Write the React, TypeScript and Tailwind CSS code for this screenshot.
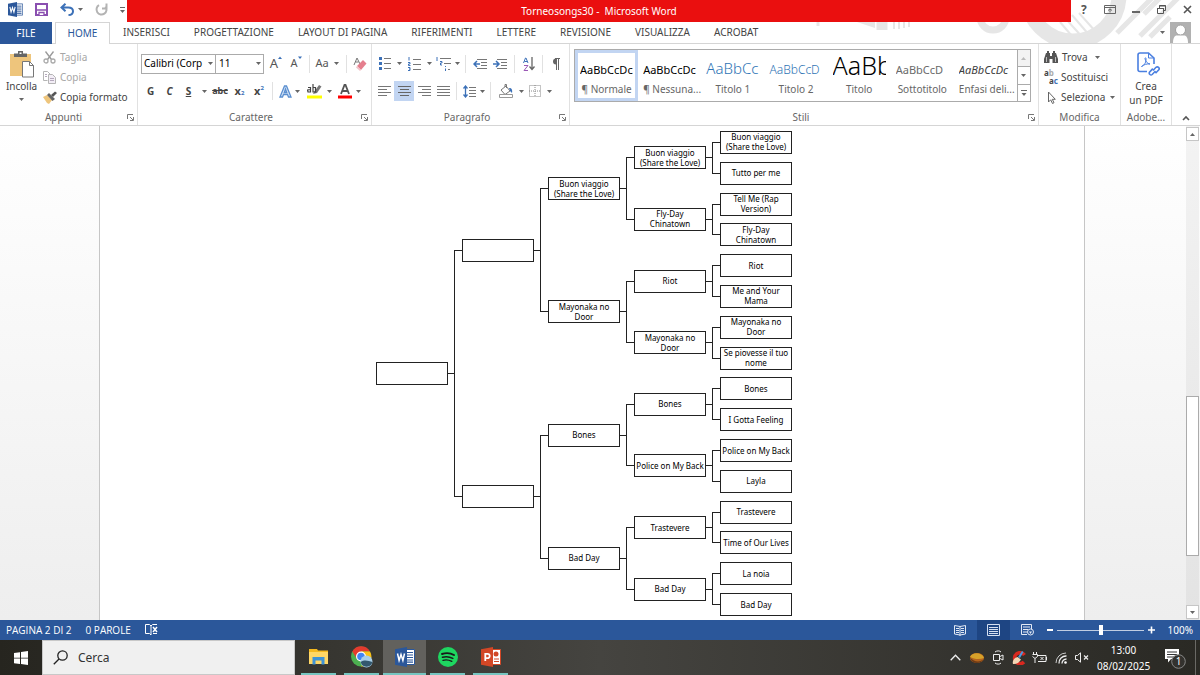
import { useState } from "react";
import type { ReactNode } from "react";

type Match = {
  label: string;
  feeders?: [Match, Match];
};

const bracket: Match = {
  label: "",
  feeders: [
    {
      label: "",
      feeders: [
        {
          label: "Buon viaggio\n(Share the Love)",
          feeders: [
            {
              label: "Buon viaggio\n(Share the Love)",
              feeders: [
                { label: "Buon viaggio\n(Share the Love)" },
                { label: "Tutto per me" },
              ],
            },
            {
              label: "Fly-Day\nChinatown",
              feeders: [
                { label: "Tell Me (Rap\nVersion)" },
                { label: "Fly-Day\nChinatown" },
              ],
            },
          ],
        },
        {
          label: "Mayonaka no\nDoor",
          feeders: [
            {
              label: "Riot",
              feeders: [{ label: "Riot" }, { label: "Me and Your\nMama" }],
            },
            {
              label: "Mayonaka no\nDoor",
              feeders: [
                { label: "Mayonaka no\nDoor" },
                { label: "Se piovesse il tuo\nnome" },
              ],
            },
          ],
        },
      ],
    },
    {
      label: "",
      feeders: [
        {
          label: "Bones",
          feeders: [
            {
              label: "Bones",
              feeders: [{ label: "Bones" }, { label: "I Gotta Feeling" }],
            },
            {
              label: "Police on My Back",
              feeders: [{ label: "Police on My Back" }, { label: "Layla" }],
            },
          ],
        },
        {
          label: "Bad Day",
          feeders: [
            {
              label: "Trastevere",
              feeders: [
                { label: "Trastevere" },
                { label: "Time of Our Lives" },
              ],
            },
            {
              label: "Bad Day",
              feeders: [{ label: "La noia" }, { label: "Bad Day" }],
            },
          ],
        },
      ],
    },
  ],
};

const tabs = [
  "INSERISCI",
  "PROGETTAZIONE",
  "LAYOUT DI PAGINA",
  "RIFERIMENTI",
  "LETTERE",
  "REVISIONE",
  "VISUALIZZA",
  "ACROBAT",
];

const styles = [
  { name: "¶ Normale", sample: "AaBbCcDc", look: "text-[11px] text-black" },
  { name: "¶ Nessuna...", sample: "AaBbCcDc", look: "text-[11px] text-black" },
  { name: "Titolo 1", sample: "AaBbCc", look: "text-[15px] font-light text-[#2e74b5]" },
  { name: "Titolo 2", sample: "AaBbCcD", look: "text-[12px] font-light text-[#2e74b5]" },
  { name: "Titolo", sample: "AaBb", look: "text-[25px] font-light text-black" },
  { name: "Sottotitolo", sample: "AaBbCcD", look: "text-[11px] text-[#6a6a6a]" },
  { name: "Enfasi deli...", sample: "AaBbCcDc", look: "text-[11px] italic text-[#404040]" },
];

function Icon({
  w,
  h,
  children,
}: {
  w: number;
  h: number;
  children: ReactNode;
}) {
  return (
    <svg
      width={w}
      height={h}
      viewBox={`0 0 ${w} ${h}`}
      fill="none"
      className="shrink-0"
      aria-hidden="true"
    >
      {children}
    </svg>
  );
}

function Caret({ className = "text-[#666]" }: { className?: string }) {
  return (
    <span className={`flex w-2 shrink-0 justify-center ${className}`}>
      <Icon w={5} h={3}>
        <path d="M0 0h5L2.500 3z" fill="currentColor" />
      </Icon>
    </span>
  );
}

function Tool({
  label,
  className = "w-5",
  children,
}: {
  label: string;
  className?: string;
  children: ReactNode;
}) {
  return (
    <button
      type="button"
      aria-label={label}
      className={`flex h-5 shrink-0 items-center justify-center ${className}`}
    >
      {children}
    </button>
  );
}

function Sep({ className = "mx-[3px]" }: { className?: string }) {
  return <span className={`h-[18px] w-px shrink-0 bg-[#e1e1e1] ${className}`} />;
}

function Group({
  title,
  launcher = false,
  className,
  children,
}: {
  title: string;
  launcher?: boolean;
  className: string;
  children: ReactNode;
}) {
  return (
    <section className={`flex flex-col ${className}`}>
      <div className="flex h-[66px] flex-col">{children}</div>
      <div className="flex h-4 items-center text-[#666]">
        <h2 className="flex-1 text-center text-[10px]">{title}</h2>
        {launcher && (
          <button type="button" aria-label={`Opzioni ${title}`} className="mr-[3px]">
            <Icon w={7} h={7}>
              <path d="M.5 5V.5H6M3 3l3 3M6.500 3v3.500H3" stroke="#777" />
            </Icon>
          </button>
        )}
      </div>
    </section>
  );
}

function WordLogo({ size }: { size: number }) {
  return (
    <svg width={size} height={size} viewBox="0 0 20 20" aria-hidden="true">
      <path d="M11 2.500h8.500v15H11z" fill="#fff" stroke="#2b579a" />
      <path
        d="M12 5.500h6M12 8h6M12 10.500h6M12 13h6M12 15.200h6"
        stroke="#2b579a"
        strokeWidth="1.200"
      />
      <path d="M0 2.200 12 0v20L0 17.800z" fill="#2b579a" />
      <path
        d="m2.500 6.500 1.600 7L6 7.500l1.900 6 1.600-7"
        fill="none"
        stroke="#fff"
        strokeWidth="1.500"
      />
    </svg>
  );
}

function TitleBar() {
  return (
    <div className="flex h-[22px]">
      <div className="flex w-[127px] shrink-0 items-center pb-[3px] pl-2">
        <WordLogo size={15} />
        <button type="button" aria-label="Salva" className="ml-3">
          <Icon w={13} h={13}>
            <path d="M1 1h11v11H1z" fill="#fff" stroke="#8a4fb0" strokeWidth="2" />
            <path d="M2 7h9" stroke="#8a4fb0" strokeWidth="1.500" />
            <path d="M4 12V9.500h5V12" fill="#fff" stroke="#8a4fb0" strokeWidth="1.300" />
          </Icon>
        </button>
        <button type="button" aria-label="Annulla" className="ml-3 flex items-center gap-[2px]">
          <Icon w={14} h={13}>
            <path
              d="M5.500.8 1.500 4.500l4 3.700M1.500 4.500h6.800c3 0 4.700 1.500 4.700 3.700 0 2.500-2 3.800-4.500 3.800"
              stroke="#3c71b8"
              strokeWidth="2"
            />
          </Icon>
          <Caret />
        </button>
        <button type="button" aria-label="Ripeti" className="ml-[11px]">
          <Icon w={13} h={13}>
            <path
              d="M4 2.200A5 5 0 1 0 10.500 3.500M7 5.500h4.500V.5"
              stroke="#b3b3b3"
              strokeWidth="2"
            />
          </Icon>
        </button>
        <button type="button" aria-label="Personalizza" className="ml-3">
          <Icon w={5} h={6}>
            <path d="M0 .5h5" stroke="#666" />
            <path d="M0 3h5L2.500 6z" fill="#666" />
          </Icon>
        </button>
      </div>
      <h1 className="flex-1 bg-[#ea0f0f] text-center text-[10px] leading-[22px] whitespace-pre text-white">
        Torneosongs30 -  Microsoft Word
      </h1>
      <div className="flex w-[129px] shrink-0 items-center justify-between pr-2 pb-[3px] pl-[10px]">
        <button type="button" aria-label="Guida" className="text-[12px] font-bold text-[#555]">
          ?
        </button>
        <button type="button" aria-label="Opzioni barra multifunzione">
          <Icon w={12} h={9}>
            <path d="M.5.5h11v8H.5zM1 2.500h10" stroke="#666" />
            <path d="M6 7.500V4M4 5.500 6 3.800l2 1.700" stroke="#666" />
          </Icon>
        </button>
        <button type="button" aria-label="Riduci a icona">
          <Icon w={8} h={8}>
            <path d="M0 6h8" stroke="#666" strokeWidth="2" />
          </Icon>
        </button>
        <button type="button" aria-label="Ripristina">
          <Icon w={9} h={9}>
            <path d="M.5 3.500h6v5h-6zM2.500 3V.5h6v5H7" stroke="#555" />
            <path d="M0 3.500h7M2 1h7" stroke="#555" />
          </Icon>
        </button>
        <button type="button" aria-label="Chiudi">
          <Icon w={9} h={9}>
            <path d="m1 1 7 7M8 1 1 8" stroke="#555" strokeWidth="1.600" />
          </Icon>
        </button>
      </div>
    </div>
  );
}

function TabBar() {
  return (
    <nav className="flex h-[22px] items-stretch text-[10px] text-[#444]">
      <button type="button" className="w-[52px] bg-[#2b579a] text-white">
        FILE
      </button>
      <div className="w-[3px] border-b border-[#d5d5d5]" />
      <button
        type="button"
        className="w-[55px] border-x border-t border-[#d5d5d5] bg-white text-[#2b579a]"
      >
        HOME
      </button>
      <div className="flex flex-1 items-center gap-6 border-b border-[#d5d5d5] pl-[13px]">
        {tabs.map((tab) => (
          <button key={tab} type="button">
            {tab}
          </button>
        ))}
      </div>
      <div className="flex items-center gap-1 border-b border-[#d5d5d5] pr-[9px]">
        <Caret />
        <Icon w={21} h={21}>
          <path d="M0 0h21v21H0z" fill="#b1b1b1" />
          <circle cx="10.500" cy="8" r="5" fill="#fff" stroke="#a0a0a0" />
          <path d="M3 21c0-5 1.500-7.500 4-7.500h7c2.500 0 4 2.500 4 7.500z" fill="#fff" />
        </Icon>
      </div>
    </nav>
  );
}

function HeaderPattern() {
  return (
    <svg
      width="400"
      height="43"
      viewBox="0 0 400 43"
      fill="none"
      className="absolute top-0 right-0"
      aria-hidden="true"
    >
      <g stroke="#e6e6e6">
        <circle cx="273" cy="-5" r="46" strokeWidth="15" />
        <circle cx="193" cy="17" r="13" strokeWidth="7" />
        <path
          d="m260 22 17 20M266 19l18 20M272 15l18 21M279 13l17 19"
          strokeWidth="2"
        />
        <path d="m317 33 36-36M328 22l28-28M340 36l44-44M350 37l20-20M344 14l22-22" strokeWidth="5" />
        <path d="M94 22v7M99 22v7M104 22v6M109 22v5" strokeWidth="2" />
        <path d="M82 22v8" strokeWidth="11" />
        <path d="M18 22v4" strokeWidth="3" />
      </g>
      <path d="M57 22h18v6z" fill="#e6e6e6" />
    </svg>
  );
}

function ClipboardGroup() {
  return (
    <Group title="Appunti" launcher className="w-[138px] shrink-0 border-r border-[#e1e1e1]">
      <div className="flex">
        <button
          type="button"
          className="flex w-[43px] flex-col items-center pt-[7px] text-[10px] text-[#444]"
        >
          <Icon w={26} h={27}>
            <path d="M1 3h21v22H1z" fill="#eec57c" />
            <path d="M5 6V2.500h4V0h5v2.500h4V6z" fill="#666" />
            <path d="M10.500 1.500h2v1.500h-2z" fill="#fff" />
            <path d="M13.500 10.500h7l4 4V26h-11z" fill="#fff" stroke="#777" />
            <path d="M20.500 10.500v4h4" stroke="#777" />
          </Icon>
          <span className="mt-px">Incolla</span>
          <span className="mt-1">
            <Caret />
          </span>
        </button>
        <div className="flex flex-col pt-[3px] text-[10px] text-[#444]">
          <button type="button" className="flex h-5 items-center gap-1 text-[#a6a6a6]">
            <Icon w={13} h={13}>
              <path d="m2.500.5 6 8M10.500.5l-6 8" stroke="#999" strokeWidth="1.300" />
              <circle cx="3" cy="10" r="2" stroke="#aaa" strokeWidth="1.300" />
              <circle cx="10" cy="10" r="2" stroke="#aaa" strokeWidth="1.300" />
            </Icon>
            Taglia
          </button>
          <button type="button" className="flex h-5 items-center gap-1 text-[#a6a6a6]">
            <Icon w={13} h={13}>
              <path d="M4.500 9.500h-4v-9h4l3 3" stroke="#b5b5b5" />
              <path d="M5.500 3.500h4l3 3v6h-7z" fill="#f3eef6" stroke="#b5b5b5" />
              <path d="M2 3.500h2M2 5.500h2M7 7.500h4M7 9.500h4" stroke="#b5a9bd" />
            </Icon>
            Copia
          </button>
          <button type="button" className="flex h-5 items-center gap-[3px]">
            <Icon w={14} h={13}>
              <path d="m0 6 4-2 5 5-3 4-2-1z" fill="#eec57c" />
              <path d="m4 4 2-2 6 6-2.500 2z" fill="#666" />
              <path d="m8 4 4-3.500L14 2l-4 4z" fill="#555" />
            </Icon>
            Copia formato
          </button>
        </div>
      </div>
    </Group>
  );
}

function FontGroup() {
  return (
    <Group
      title="Carattere"
      launcher
      className="w-[234px] shrink-0 border-r border-[#e1e1e1] pl-[3px]"
    >
      <div className="flex h-[37px] items-center pt-[2px]">
        <div className="relative w-[75px]">
          <select
            aria-label="Tipo di carattere"
            className="block h-5 w-full appearance-none border border-[#ababab] bg-white pl-[2px] text-[10px] text-black"
          >
            <option>Calibri (Corp</option>
          </select>
          <span className="pointer-events-none absolute top-2 right-[2px]">
            <Caret />
          </span>
        </div>
        <div className="relative mr-[2px] w-12">
          <select
            aria-label="Dimensione carattere"
            className="block h-5 w-full appearance-none border border-l-0 border-[#ababab] bg-white pl-[3px] text-[10px] text-black"
          >
            <option>11</option>
          </select>
          <span className="pointer-events-none absolute top-2 right-[2px]">
            <Caret />
          </span>
        </div>
        <Tool label="Aumenta carattere">
          <span className="text-[13px] text-[#555]">A</span>
          <span className="self-start text-[#3c71b8]">
            <Icon w={4} h={5}>
              <path d="M0 5 2 2.500 4 5z" fill="currentColor" />
            </Icon>
          </span>
        </Tool>
        <Tool label="Riduci carattere">
          <span className="text-[11px] text-[#555]">A</span>
          <span className="self-start">
            <Icon w={4} h={5}>
              <path d="M0 2.500h4L2 5z" fill="#3c71b8" />
            </Icon>
          </span>
        </Tool>
        <Sep />
        <Tool label="Maiuscole/minuscole" className="w-[30px] gap-1">
          <span className="text-[11px] text-[#555]">Aa</span>
          <Caret />
        </Tool>
        <Sep />
        <Tool label="Cancella formattazione">
          <Icon w={14} h={14}>
            <path d="m1 8 3-7 3 6M2.500 5h3" stroke="#777" />
            <path d="m4 9 6-6 3.500 3.500L8 13z" fill="#e57f8e" />
            <path d="m4 9 4 4-1 1-4-3.500z" fill="#f3c4ca" />
          </Icon>
        </Tool>
      </div>
      <div className="flex h-5 items-center text-[#444]">
        <Tool label="Grassetto" className="w-[19px] text-[10px] font-bold">
          G
        </Tool>
        <Tool label="Corsivo" className="w-[19px] text-[10px] font-bold italic">
          C
        </Tool>
        <Tool label="Sottolineato" className="w-[19px] text-[10px] font-bold underline">
          S
        </Tool>
        <Tool label="Stile sottolineatura" className="w-3">
          <Caret />
        </Tool>
        <Tool label="Barrato" className="w-5 text-[9px] font-bold line-through">
          abc
        </Tool>
        <Tool label="Pedice" className="w-[19px] text-[11px] font-bold">
          x
          <sub className="text-[6px] text-[#3c71b8]">2</sub>
        </Tool>
        <Tool label="Apice" className="w-5 text-[11px] font-bold">
          x
          <sup className="text-[6px] text-[#3c71b8]">2</sup>
        </Tool>
        <Sep />
        <Tool label="Effetti testo" className="w-[28px]">
          <Icon w={13} h={13}>
            <path
              d="M1 12 5.500 1h2L12 12H9.500L8.500 9.500h-4L3.500 12zM5.300 7.500h2.400L6.500 4z"
              fill="#dbe8f7"
              stroke="#5b8fd0"
              strokeWidth="1.300"
            />
          </Icon>
          <span className="ml-[2px]">
            <Caret />
          </span>
        </Tool>
        <Tool label="Colore evidenziatore" className="w-8 gap-1">
          <Icon w={15} h={15}>
            <path d="M7 8 12 1l2.500 1.500L10 9l-4 1z" fill="#777" />
            <path
              d="M1 3.500h2.500V8H1L.5 6 3.500 5.500M6 0v8h2.500V3.500H6"
              stroke="#444"
              strokeWidth="1.200"
            />
            <path d="M0 11.500h15v3H0z" fill="#ffff00" />
          </Icon>
          <Caret />
        </Tool>
        <Tool label="Colore carattere" className="w-7 gap-[3px]">
          <Icon w={14} h={15}>
            <path d="m3 10 3.500-9h1L11 10M4.500 7h5" stroke="#555" strokeWidth="1.800" />
            <path d="M0 11.500h14v3H0z" fill="#ff0000" />
          </Icon>
          <Caret />
        </Tool>
      </div>
    </Group>
  );
}

function ParagraphGroup() {
  return (
    <Group
      title="Paragrafo"
      launcher
      className="w-[198px] shrink-0 border-r border-[#e1e1e1] pl-[3px]"
    >
      <div className="flex h-[37px] items-center pt-[2px]">
        <Tool label="Elenchi puntati">
          <Icon w={12} h={13}>
            <path d="M0 0h3v3H0zM0 5h3v3H0zM0 10h3v3H0z" fill="#3c71b8" />
            <path d="M5 1.500h7M5 6.500h7M5 11.500h7" stroke="#777" />
          </Icon>
        </Tool>
        <Caret />
        <Tool label="Elenchi numerati" className="w-[22px]">
          <Icon w={13} h={14}>
            <path
              d="M1 0v3.500M0 5.500h2v1.500H.5v1.500h2M0 10.500h2v3H0M1 12h1"
              stroke="#3c71b8"
            />
            <path d="M5 2.500h8M5 7.500h8M5 12.500h8" stroke="#777" />
          </Icon>
        </Tool>
        <Caret />
        <Tool label="Elenco a più livelli">
          <Icon w={15} h={14}>
            <path d="M1 0v4M4 4.500h2V6H4.500v2H6M9.500 9v1M9.500 11.500V14" stroke="#3c71b8" />
            <path d="M4 1.500h11M8 6.500h7M12 12.500h2" stroke="#777" />
          </Icon>
        </Tool>
        <Caret />
        <Sep className="mx-1" />
        <Tool label="Riduci rientro">
          <Icon w={14} h={11}>
            <path d="M4 1.500h10M8 4.500h6M8 7.500h6M4 10.500h10" stroke="#777" />
            <path d="M7 6H1M4 3 1 6l3 3" stroke="#3c71b8" strokeWidth="1.500" />
          </Icon>
        </Tool>
        <Tool label="Aumenta rientro">
          <Icon w={14} h={11}>
            <path d="M4 1.500h10M8 4.500h6M8 7.500h6M4 10.500h10" stroke="#777" />
            <path d="M0 6h6M3 3l3 3-3 3" stroke="#3c71b8" strokeWidth="1.500" />
          </Icon>
        </Tool>
        <Sep className="mx-1" />
        <Tool label="Ordina">
          <Icon w={12} h={14}>
            <path d="m.5 6 2-5h.5l2 5M1.500 4.500h3" stroke="#3c71b8" />
            <path d="M1 8.500h4l-4 5h4" stroke="#9b59b6" />
            <path d="M9 0v12M6.500 9.500 9 12.500l2.500-3" stroke="#666" strokeWidth="1.300" />
          </Icon>
        </Tool>
        <Sep />
        <Tool label="Mostra tutto">
          <Icon w={8} h={12}>
            <path d="M4 6.500A3 3 0 0 1 4 .5z" fill="#666" />
            <path d="M3 .5h5M4.500 1v11M6.500 1v11" stroke="#666" />
          </Icon>
        </Tool>
      </div>
      <div className="flex h-5 items-center">
        <Tool label="Allinea a sinistra" className="w-[19px]">
          <Icon w={13} h={10}>
            <path d="M0 .5h13M0 3.500h9M0 6.500h13M0 9.500h9" stroke="#777" />
          </Icon>
        </Tool>
        <Tool label="Centra" className="w-5 bg-[#c2d5f2]">
          <Icon w={13} h={10}>
            <path d="M0 .5h13M2 3.500h9M0 6.500h13M2 9.500h9" stroke="#666" />
          </Icon>
        </Tool>
        <Tool label="Allinea a destra">
          <Icon w={13} h={10}>
            <path d="M0 .5h13M4 3.500h9M0 6.500h13M4 9.500h9" stroke="#777" />
          </Icon>
        </Tool>
        <Tool label="Giustifica" className="w-[19px]">
          <Icon w={13} h={10}>
            <path d="M0 .5h13M0 3.500h13M0 6.500h13M0 9.500h13" stroke="#777" />
          </Icon>
        </Tool>
        <Sep />
        <Tool label="Interlinea" className="w-[18px]">
          <Icon w={13} h={13}>
            <path d="M2.500 1v11M.5 3.500l2-2.500 2 2.500M.5 9.500l2 2.500 2-2.500" stroke="#3c71b8" strokeWidth="1.300" />
            <path d="M6 2.500h7M6 5.500h7M6 8.500h7M6 11.500h7" stroke="#777" />
          </Icon>
        </Tool>
        <Caret />
        <Sep className="mx-1" />
        <Tool label="Sfondo" className="w-[22px]">
          <Icon w={14} h={14}>
            <path d="m2 6 5-4 4 5-5 3.500zM6 3V.5h1.500V4" stroke="#777" />
            <path d="M10 4c3 0 3.500 2 3 5l-2-2z" fill="#3c71b8" />
            <path d="M.5 10.500h13v3H.5z" fill="#fff" stroke="#999" />
          </Icon>
        </Tool>
        <Caret />
        <Tool label="Bordi">
          <Icon w={12} h={12}>
            <path
              d="M.5.5h11v11H.5zM6 0v12M0 6h12"
              stroke="#888"
              strokeDasharray="1 1"
            />
          </Icon>
        </Tool>
        <Caret />
      </div>
    </Group>
  );
}

function StylesGroup() {
  const [selected, setSelected] = useState("¶ Normale");

  return (
    <Group
      title="Stili"
      launcher
      className="min-w-0 flex-1 border-r border-[#e1e1e1] pl-1"
    >
      <div className="mt-[5px] mr-[7px] flex h-[53px] border border-[#ababab] bg-white">
        {styles.map((style) => (
          <button
            key={style.name}
            type="button"
            onClick={() => setSelected(style.name)}
            className={
              style.name === selected
                ? "flex min-w-0 flex-1 flex-col border-[3px] border-[#c2d5f2] px-[2px]"
                : "flex min-w-0 flex-1 flex-col px-[5px] py-[3px]"
            }
          >
            <span
              className={`flex h-7 w-full items-baseline overflow-hidden leading-none whitespace-nowrap before:h-[21px] ${style.look}`}
            >
              {style.sample}
            </span>
            <span className="w-full text-center text-[10px] leading-4 whitespace-nowrap text-[#666]">
              {style.name}
            </span>
          </button>
        ))}
        <div className="flex w-[13px] flex-col divide-y divide-[#ababab] border-l border-[#ababab]">
          <button
            type="button"
            aria-label="Stili precedenti"
            className="flex flex-1 items-center justify-center bg-[#f3f3f3]"
          >
            <Icon w={5} h={3}>
              <path d="M0 3h5L2.500 0z" fill="#bbb" />
            </Icon>
          </button>
          <button
            type="button"
            aria-label="Stili successivi"
            className="flex flex-1 items-center justify-center"
          >
            <Caret />
          </button>
          <button
            type="button"
            aria-label="Altri stili"
            className="flex flex-1 items-center justify-center"
          >
            <Icon w={6} h={6}>
              <path d="M0 .5h6" stroke="#666" />
              <path d="M.5 3h5L3 6z" fill="#666" />
            </Icon>
          </button>
        </div>
      </div>
    </Group>
  );
}

function EditGroup() {
  return (
    <Group title="Modifica" className="w-[82px] shrink-0 border-r border-[#e1e1e1]">
      <div className="flex flex-col pt-[3px] pl-[5px] text-[10px] text-[#444]">
        <button type="button" className="flex h-5 items-center gap-1">
          <Icon w={14} h={12}>
            <path
              d="M2 2h4v3h2V2h4l2 6v4H8.500V8h-3v4H0V8zM3 0h2v2H3zM9 0h2v2H9z"
              fill="#555"
            />
            <path d="M2.500 6v5M11.500 6v5" stroke="#bbb" />
          </Icon>
          Trova
          <span className="ml-[2px]">
            <Caret />
          </span>
        </button>
        <button type="button" className="flex h-5 items-center gap-[3px]">
          <span className="flex w-[14px] flex-col text-[8px] leading-[8px] font-bold">
            <span className="self-start">
              a<span className="text-[#aaa]">b</span>
            </span>
            <span className="self-end">
              a<span className="text-[#3c71b8]">c</span>
            </span>
          </span>
          Sostituisci
        </button>
        <button type="button" className="flex h-5 items-center gap-[3px]">
          <Icon w={14} h={13}>
            <path d="M4.500 1v10l2.200-2.200L8.500 12.500l1.500-.8-1.700-3.400h3z" stroke="#666" />
          </Icon>
          <span>Seleziona</span>
          <Caret />
        </button>
      </div>
    </Group>
  );
}

function AdobeGroup() {
  return (
    <Group title="Adobe..." className="w-[51px] shrink-0 border-r border-[#e1e1e1]">
      <button
        type="button"
        className="flex flex-col items-center pt-2 text-[10px] leading-[14px] text-[#444]"
      >
        <span className="pl-1">
          <Icon w={23} h={26}>
            <path
              d="M10 19.500H3A2 2 0 0 1 1 17.500V3a2 2 0 0 1 2-2h8.500l5.500 5v6"
              stroke="#4a7fe0"
              strokeWidth="1.600"
            />
            <path d="M11.500 1v5H17" stroke="#4a7fe0" />
            <path
              d="M4.500 14.500c3-1 5-5 4.500-8-.2-1-1.200-1-1 .2.400 2.800 2.500 5 5 5.300-3-.4-6 .5-8.500 2.500z"
              stroke="#4a7fe0"
            />
            <path
              d="m16 18.500 3-3.200c1.800-1.300 4 .7 2.800 2.500l-3.300 3.400M18.500 19l-3.300 3.500c-1.500 1.300-3.700-.5-2.700-2.400l3.300-3.500"
              stroke="#4a7fe0"
              strokeWidth="1.600"
            />
          </Icon>
        </span>
        <span className="mt-px">Crea</span>
        <span>un PDF</span>
      </button>
    </Group>
  );
}

function Ribbon() {
  return (
    <div className="flex h-[82px] border-b border-[#d5d5d5] bg-white">
      <ClipboardGroup />
      <FontGroup />
      <ParagraphGroup />
      <StylesGroup />
      <EditGroup />
      <AdobeGroup />
      <div className="flex w-7 shrink-0 items-end justify-center pb-1">
        <button type="button" aria-label="Comprimi barra multifunzione">
          <Icon w={8} h={6}>
            <path d="m1 5 3-3 3 3" stroke="#555" strokeWidth="1.600" />
          </Icon>
        </button>
      </div>
    </div>
  );
}

function MatchTree({ match }: { match: Match }) {
  return (
    <div className="flex flex-1 items-center">
      <div className="flex h-[23px] w-[72px] shrink-0 items-center justify-center border border-[#222] bg-white text-center text-[8px] leading-[10px] whitespace-pre text-black">
        {match.label}
      </div>
      {match.feeders && (
        <>
          <div className="h-px w-[6px] bg-[#222]" />
          <div className="flex flex-col self-stretch">
            {match.feeders.map((feeder, i) => (
              <div key={i} className="flex flex-1">
                <div className="flex w-2 flex-col">
                  <div
                    className={i === 0 ? "flex-1" : "flex-1 border-b border-l border-[#222]"}
                  />
                  <div
                    className={i === 0 ? "flex-1 border-t border-l border-[#222]" : "flex-1"}
                  />
                </div>
                <MatchTree match={feeder} />
              </div>
            ))}
          </div>
        </>
      )}
    </div>
  );
}

function Document() {
  return (
    <main className="flex min-h-[494px] flex-1 bg-linear-to-b from-white to-[#eeeeee]">
      <article className="mr-[101px] ml-[99px] flex flex-1 justify-center border-x border-[#c6c6c6] bg-white pt-px pr-4">
        <div className="flex">
          <MatchTree match={bracket} />
        </div>
      </article>
      <div className="mr-px flex w-[13px] flex-col bg-linear-to-b from-[#f3f3f3] to-[#e3e3e3] pt-px pb-px">
        <button
          type="button"
          aria-label="Scorri in alto"
          className="flex h-[14px] items-center justify-center border border-[#c6c6c6] bg-white"
        >
          <Icon w={5} h={3}>
            <path d="M0 3h5L2.500 0z" fill="#666" />
          </Icon>
        </button>
        <div className="flex-[255]" />
        <div className="h-[160px] border border-[#ababab] bg-white" />
        <div className="flex-[49]" />
        <button
          type="button"
          aria-label="Scorri in basso"
          className="flex h-[14px] items-center justify-center border border-[#c6c6c6] bg-white"
        >
          <Caret />
        </button>
      </div>
    </main>
  );
}

function StatusBar() {
  return (
    <div className="flex h-5 items-center bg-[#2b579a] text-[10px] text-white">
      <span className="pl-[6px] font-['Open_Sans',sans-serif]">PAGINA 2 DI 2</span>
      <span className="pl-[14px] font-['Open_Sans',sans-serif]">0 PAROLE</span>
      <button type="button" aria-label="Correzione" className="ml-[14px]">
        <Icon w={13} h={12}>
          <path d="M6 2 4.500.5h-4v9h4L6 11V2l1.500-1.500H12M8 9.500h4" stroke="#fff" />
          <path d="m8 3 4 5M12 3 8 8" stroke="#fff" strokeWidth="1.500" />
        </Icon>
      </button>
      <div className="ml-auto flex h-full items-center">
        <button type="button" aria-label="Lettura" className="flex h-full w-[34px] items-center justify-center">
          <Icon w={12} h={11}>
            <path d="M6 1.500.5.5v8.500l5.500 1 5.500-1V.5zM6 1.500V11" stroke="#e3eaf5" />
            <path d="M2 3.500h3M2 5.500h3M2 7.500h3M7 3.500h3M7 5.500h3M7 7.500h3" stroke="#e3eaf5" />
          </Icon>
        </button>
        <button
          type="button"
          aria-label="Layout di stampa"
          className="flex h-full w-[33px] items-center justify-center bg-[#1e4583]"
        >
          <Icon w={13} h={12}>
            <path d="M.5.5h12v11H.5z" stroke="#d5dff0" />
            <path d="M2 3.500h9M2 5.500h9M2 7.500h9M2 9.500h9" stroke="#d5dff0" />
          </Icon>
        </button>
        <button type="button" aria-label="Layout Web" className="flex h-full w-[34px] items-center justify-center">
          <Icon w={13} h={12}>
            <path d="M6 10.500H.5V.5h10V5M2 3h7M2 5.500h5M2 8h4" stroke="#e3eaf5" />
            <circle cx="9.500" cy="8" r="3" fill="#2b579a" stroke="#e3eaf5" />
            <path d="M8 7.500h3L9.500 10z" fill="#e3eaf5" />
          </Icon>
        </button>
        <button type="button" aria-label="Zoom indietro" className="ml-[3px]">
          <Icon w={6} h={8}>
            <path d="M0 4h6" stroke="#fff" strokeWidth="2" />
          </Icon>
        </button>
        <input
          type="range"
          aria-label="Zoom"
          min={0}
          max={100}
          defaultValue={50}
          className="mx-1 h-[10px] w-[87px] appearance-none bg-transparent [&::-webkit-slider-runnable-track]:h-px [&::-webkit-slider-runnable-track]:bg-[#c0cde2] [&::-webkit-slider-thumb]:-mt-[5px] [&::-webkit-slider-thumb]:h-[10px] [&::-webkit-slider-thumb]:w-1 [&::-webkit-slider-thumb]:appearance-none [&::-webkit-slider-thumb]:bg-white"
        />
        <button type="button" aria-label="Zoom avanti">
          <Icon w={7} h={8}>
            <path d="M0 4h7M3.500.5v7" stroke="#fff" strokeWidth="1.600" />
          </Icon>
        </button>
        <span className="w-[45px] pr-[7px] text-right">100%</span>
      </div>
    </div>
  );
}

function TaskApp({
  label,
  active = false,
  children,
}: {
  label: string;
  active?: boolean;
  children: ReactNode;
}) {
  return (
    <button
      type="button"
      aria-label={label}
      className={
        active
          ? "flex h-full w-[43px] flex-col items-center bg-[#62615d]"
          : "flex h-full w-[43px] flex-col items-center px-1"
      }
    >
      <span className="flex flex-1 items-center">{children}</span>
      <span className="h-[2px] w-full bg-[#76c5c0]" />
    </button>
  );
}

function Taskbar() {
  return (
    <footer className="flex h-[35px] items-center bg-linear-to-r from-[#26251f] via-[#454440] to-[#2a2924] text-white">
      <button type="button" aria-label="Start" className="flex w-[42px] justify-center">
        <Icon w={14} h={14}>
          <path d="m0 2 6-.8v5.500H0zM7 1l7-1v6.700H7zM0 7.500h6V13l-6-.8zM7 7.500h7V14l-7-1z" fill="#fff" />
        </Icon>
      </button>
      <label className="flex h-full w-[253px] items-center gap-[10px] border border-[#c8c8c8] bg-[#f0f0f0] pl-[10px]">
        <Icon w={15} h={15}>
          <circle cx="9.500" cy="5.500" r="4.700" stroke="#222" strokeWidth="1.300" />
          <path d="M6 9 .8 14.200" stroke="#222" strokeWidth="1.300" />
        </Icon>
        <input
          type="text"
          aria-label="Cerca"
          placeholder="Cerca"
          className="w-40 bg-transparent text-[12px] text-[#333] outline-none placeholder:text-[#333]"
        />
      </label>
      <div className="ml-[2px] flex h-full">
        <TaskApp label="Esplora file">
          <Icon w={19} h={17}>
            <path d="M0 1h8l1 1.500h10V16H0z" fill="#f5b91f" />
            <path d="M0 4h19v12H0z" fill="#ffd766" />
            <path d="M3.500 9h12v7.500h-3v-4h-6v4h-3z" fill="#3f93d6" />
          </Icon>
        </TaskApp>
        <TaskApp label="Chrome">
          <Icon w={23} h={22}>
            <circle cx="11" cy="10.500" r="10" fill="#4caf50" />
            <path d="M2.300 5.500A10 10 0 0 1 20 5.500H11L7 13z" fill="#e33b2e" />
            <path d="M20 5.500a10 10 0 0 1-9 15l5-8-5-7z" fill="#fbc116" />
            <circle cx="11" cy="10.500" r="5" fill="#fff" />
            <circle cx="11" cy="10.500" r="3.800" fill="#4285f4" />
            <circle cx="16.500" cy="15.500" r="6" fill="#a9cfe8" />
            <path d="M10.700 16c4-3 8-1 11.700 0a6 6 0 0 1-11.700 0z" fill="#33586e" />
          </Icon>
        </TaskApp>
        <TaskApp label="Word" active>
          <WordLogo size={20} />
        </TaskApp>
        <TaskApp label="Spotify">
          <Icon w={20} h={20}>
            <circle cx="10" cy="10" r="10" fill="#1ed760" />
            <path d="M4 7c4-1.300 8.500-1 12 1" stroke="#1a1a1a" strokeWidth="1.900" strokeLinecap="round" />
            <path d="M4.500 10.300c3.500-1 7-.6 10.300 1.100" stroke="#1a1a1a" strokeWidth="1.600" strokeLinecap="round" />
            <path d="M5 13.300c3-.7 6-.4 8.800 1.100" stroke="#1a1a1a" strokeWidth="1.300" strokeLinecap="round" />
          </Icon>
        </TaskApp>
        <TaskApp label="PowerPoint">
          <Icon w={20} h={20}>
            <path d="M11 2.500h8.500v15H11z" fill="#fff" stroke="#d24726" />
            <circle cx="15" cy="7" r="2.500" fill="#d24726" />
            <path d="M13 12h5M13 14.500h5" stroke="#d24726" />
            <path d="M0 2.200 12 0v20L0 17.800z" fill="#d24726" />
            <path d="M4.300 14V6.800h2.200a2.200 2.200 0 0 1 0 4.400H4.300" stroke="#fff" strokeWidth="1.800" />
          </Icon>
        </TaskApp>
      </div>
      <div className="ml-auto flex h-full items-center">
        <div className="grid w-[147px] grid-cols-7 items-center justify-items-center">
          <Icon w={11} h={7}>
            <path d="m.7 6.300 4.800-5 4.800 5" stroke="#eee" strokeWidth="1.300" />
          </Icon>
          <Icon w={14} h={12}>
            <ellipse cx="7" cy="6" rx="7" ry="5" fill="#b5651d" />
            <path d="M0 5C2 0 12 0 14 6 9 8 4 7 0 5z" fill="#d6a12a" />
            <path d="M0 5c3 5 10 6 14 2-2 4-10 6-13 1z" fill="#6b3a16" />
          </Icon>
          <Icon w={12} h={15}>
            <path d="M1.500 4.500h6v6h-6zM8 6.500l3-1.500v5L8 8.500M3 2c2-1.500 4.500-1.500 6 0M3 13c2 1.500 4.500 1.500 6 0" stroke="#eee" />
          </Icon>
          <Icon w={14} h={14}>
            <path d="M12.500 4A5.500 5.500 0 1 0 12 11" stroke="#d8281f" strokeWidth="3.500" />
            <path d="m10 0 1.500 1L8 7 6 6z" fill="#4a9be0" />
            <path d="M5.500 6 9 8.500C7 12 4 13.500 1 13c-1-3 1-6 4.500-7z" fill="#f2d6b5" />
          </Icon>
          <Icon w={15} h={12}>
            <path d="M6 3.500h8v6H6M14.500 5v3M8.500 5l3 3M11.500 5l-3 3M1.500 0v2.500M4.500 0v2.500M.5 2.500h5v2L3 6.500.5 4.500M3 6.500V11" stroke="#eee" />
          </Icon>
          <Icon w={12} h={12}>
            <path d="M1 11A10 10 0 0 1 11 1" stroke="#ccc" />
            <path d="M4 11.500a7 7 0 0 1 7.500-7.500M7 11.500A4.500 4.500 0 0 1 11.500 7" stroke="#eee" strokeWidth="1.300" />
            <circle cx="10.500" cy="10.500" r="1.300" fill="#fff" />
          </Icon>
          <Icon w={14} h={11}>
            <path d="M.5 3.500h2L5.500.8v9.400L2.500 7.500h-2z" stroke="#eee" />
            <path d="m9 3.500 4 4M13 3.500l-4 4" stroke="#eee" strokeWidth="1.200" />
          </Icon>
        </div>
        <time className="ml-[5px] w-[53px] text-center text-[10px] leading-4">
          13:00
          <br />
          08/02/2025
        </time>
        <button type="button" aria-label="Notifiche" className="relative ml-[14px]">
          <Icon w={22} h={22}>
            <path d="M1 2h14v10H7l-3 3.500V12H1z" fill="#fff" />
            <path d="M3 5h10M3 7.500h10M3 10h7" stroke="#333" />
            <circle cx="14.500" cy="14.500" r="6.800" fill="#33322e" stroke="#888" />
          </Icon>
          <span className="absolute right-1 bottom-0 w-[7px] text-center text-[10px] leading-[15px]">
            1
          </span>
        </button>
        <span className="mr-1 ml-[9px] h-full w-px bg-[#6a6965]" />
      </div>
    </footer>
  );
}

export default function App() {
  return (
    <div className="flex min-h-screen min-w-[1100px] flex-col bg-white font-['Noto_Sans','Open_Sans',sans-serif]">
      <header className="relative bg-white">
        <HeaderPattern />
        <div className="relative">
          <TitleBar />
          <TabBar />
          <Ribbon />
        </div>
      </header>
      <Document />
      <StatusBar />
      <Taskbar />
    </div>
  );
}
